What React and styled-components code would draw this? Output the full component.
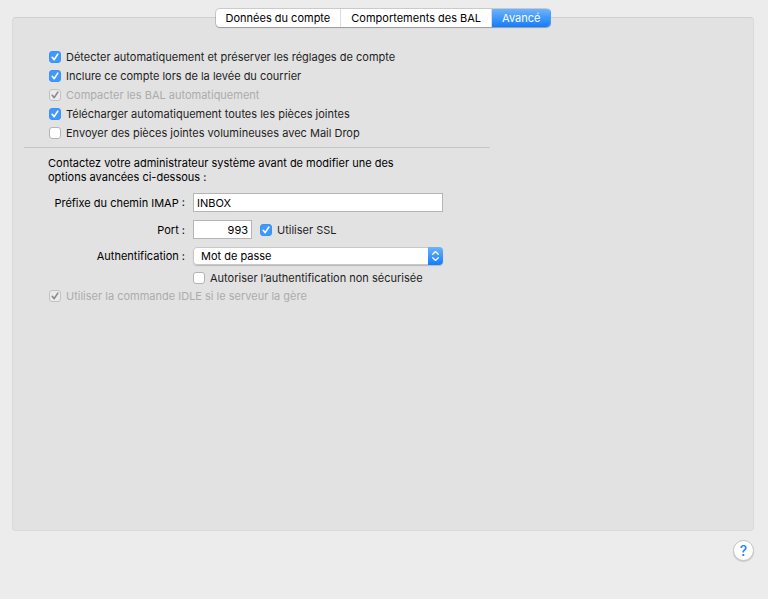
import { useState } from "react";
import styled, { createGlobalStyle } from "styled-components";

const TABS = ["Données du compte", "Comportements des BAL", "Avancé"];

const OPTIONS = [
  { id: "detect", label: "Détecter automatiquement et préserver les réglages de compte", checked: true },
  { id: "include", label: "Inclure ce compte lors de la levée du courrier", checked: true },
  { id: "compact", label: "Compacter les BAL automatiquement", checked: true, disabled: true },
  { id: "download", label: "Télécharger automatiquement toutes les pièces jointes", checked: true },
  { id: "maildrop", label: "Envoyer des pièces jointes volumineuses avec Mail Drop", checked: false },
];

function CheckOption({ id, label, checked = false, disabled = false }) {
  return (
    <CheckLabel htmlFor={id} $disabled={disabled}>
      <CheckMark>
        <CheckInput id={id} type="checkbox" defaultChecked={checked} disabled={disabled} />
        <svg width="12" height="12" viewBox="0 0 12 12" fill="none" aria-hidden="true">
          <path d="M3.2 6.3 L5.2 8.6 L8.8 3.1" stroke="currentColor" strokeWidth="1.7" strokeLinecap="round" strokeLinejoin="round" />
        </svg>
      </CheckMark>
      <span>{label}</span>
    </CheckLabel>
  );
}

export default function App() {
  const [tab, setTab] = useState(2);

  return (
    <>
      <GlobalStyle />
      <Page>
        <Tabs role="tablist">
          {TABS.map((name, i) => (
            <Tab key={name} role="tab" aria-selected={tab === i} $active={tab === i} onClick={() => setTab(i)}>
              {name}
            </Tab>
          ))}
        </Tabs>

        <Panel role="tabpanel">
          <Content>
            <CheckList>
              {OPTIONS.map((option) => (
                <CheckOption key={option.id} {...option} />
              ))}
            </CheckList>

            <Separator />

            <Advanced>
              <Notice>
                Contactez votre administrateur système avant de modifier une des options avancées ci-dessous :
              </Notice>

              <Form>
                <FieldLabel htmlFor="prefix">Préfixe du chemin IMAP :</FieldLabel>
                <TextField id="prefix" type="text" defaultValue="INBOX" />

                <FieldLabel htmlFor="port">Port :</FieldLabel>
                <FieldRow>
                  <PortField id="port" type="text" defaultValue="993" />
                  <CheckOption id="ssl" label="Utiliser SSL" checked />
                </FieldRow>

                <FieldLabel htmlFor="auth">Authentification :</FieldLabel>
                <SelectBox>
                  <Select id="auth" defaultValue="password">
                    <option value="password">Mot de passe</option>
                  </Select>
                  <SelectArrows>
                    <svg width="15" height="18" viewBox="0 0 15 18" fill="none" stroke="#fff" strokeWidth="1.3" strokeLinecap="round" strokeLinejoin="round" aria-hidden="true">
                      <path d="M4.7 7.2 L7.5 4.6 L10.3 7.2 M4.7 10.8 L7.5 13.4 L10.3 10.8" />
                    </svg>
                  </SelectArrows>
                </SelectBox>
              </Form>

              <Nested>
                <CheckOption id="insecure" label="Autoriser l’authentification non sécurisée" />
              </Nested>
              <CheckOption id="idle" label="Utiliser la commande IDLE si le serveur la gère" checked disabled />
            </Advanced>
          </Content>
        </Panel>

        <Footer>
          <HelpButton aria-label="Aide">?</HelpButton>
        </Footer>
      </Page>
    </>
  );
}

const GlobalStyle = createGlobalStyle`
  * {
    box-sizing: border-box;
  }

  body {
    margin: 0;
    background: #ececec;
    color: #000;
    font-family: Inter, "Liberation Sans", sans-serif;
    font-size: 11px;
    line-height: 14px;
  }

  button, input, select {
    margin: 0;
    font: inherit;
    color: inherit;
  }
`;

const Page = styled.main`
  display: flex;
  flex-direction: column;
  min-height: 100vh;
  padding: 9px 14px 0 12px;
`;

/* ── Tabs, straddling the top edge of the panel ── */
const Tabs = styled.div`
  display: flex;
  align-self: center;
  z-index: 1;
  height: 18px;
  margin-bottom: -10px;
  border-radius: 4px;
  background: #fff;
  box-shadow: 0 0 0 1px rgba(0,0,0,0.14), 0 1px 1px rgba(0,0,0,0.2);
`;

const Tab = styled.button`
  padding: 0 10px;
  border: none;
  border-right: 1px solid #dcdcdc;
  background: ${({ $active }) => $active ? "linear-gradient(#6cb3fa, #137dfd)" : "transparent"};
  box-shadow: ${({ $active }) => $active ? "1px 0 0 #4a9bf5" : "none"};
  color: ${({ $active }) => $active ? "#fff" : "#000"};
  line-height: 18px;
  white-space: nowrap;

  &:first-child {
    border-radius: 4px 0 0 4px;
  }

  &:last-child {
    border-right: none;
    border-radius: 0 4px 4px 0;
  }
`;

const Panel = styled.section`
  flex: 1;
  padding: 30px 11px 16px;
  border: 1px solid #dadada;
  border-top-color: #d0d0d0;
  border-radius: 4px;
  background: #e2e2e2;
`;

const Content = styled.div`
  max-width: 466px;
`;

/* ── Checkboxes ── */
const CheckList = styled.div`
  display: flex;
  flex-direction: column;
  align-items: flex-start;
  gap: 1px;
  padding-left: 25px;
`;

const CheckLabel = styled.label`
  display: flex;
  align-items: center;
  gap: 5px;
  line-height: 18px;
  color: ${({ $disabled }) => $disabled ? "#acacac" : "#1e1e1e"};
`;

const CheckMark = styled.span`
  display: grid;
  flex: none;
  width: 12px;
  height: 12px;
  color: #fff;

  > * {
    grid-area: 1 / 1;
  }

  svg {
    pointer-events: none;
  }

  input:disabled + svg {
    color: #8c8c8c;
  }

  input:not(:checked) + svg {
    visibility: hidden;
  }
`;

const CheckInput = styled.input`
  appearance: none;
  width: 12px;
  height: 12px;
  border: 1px solid #b4b4b4;
  border-radius: 3px;
  background: #fff;

  &:checked {
    border-color: #3a92f7;
    background: #3f99fc;
  }

  &:disabled {
    border-color: #c2c2c2;
    background: #ebebeb;
  }
`;

const Separator = styled.hr`
  height: 1px;
  margin: 5px 0 8px;
  border: none;
  background: #c6c6c6;
`;

/* ── Server settings ── */
const Advanced = styled.div`
  padding-left: 25px;
`;

const Notice = styled.p`
  max-width: 370px;
  margin: 0 0 9px -1px;
`;

const Form = styled.div`
  display: grid;
  grid-template-columns: 136px minmax(0, 250px);
  align-items: center;
  gap: 8px;
`;

const FieldLabel = styled.label`
  text-align: right;
  white-space: nowrap;
`;

const FieldRow = styled.div`
  display: flex;
  align-items: center;
  gap: 8px;
`;

const TextField = styled.input`
  width: 100%;
  height: 19px;
  padding: 0 3px;
  border: 1px solid #b5b5b5;
  background: #fff;
`;

const PortField = styled(TextField)`
  width: 59px;
  text-align: right;
`;

const SelectBox = styled.div`
  display: grid;
  grid-template-columns: 1fr 15px;
  height: 18px;
  border-radius: 4px;
  background: #fff;
  box-shadow: inset 0 0 0 1px #c8c8c8, 0 1px 1px rgba(0,0,0,0.18);
`;

const Select = styled.select`
  grid-area: 1 / 1 / 2 / 3;
  appearance: none;
  padding: 0 23px 0 8px;
  border: none;
  background: transparent;
`;

const SelectArrows = styled.span`
  grid-area: 1 / 2;
  height: 18px;
  border-radius: 0 4px 4px 0;
  background: linear-gradient(#6cb3fa, #137dfd);
  pointer-events: none;

  svg {
    display: block;
  }
`;

const Nested = styled.div`
  padding: 4px 0 0 144px;
`;

const Footer = styled.footer`
  display: flex;
  justify-content: flex-end;
  padding: 9px 0 38px;
`;

const HelpButton = styled.button`
  width: 21px;
  height: 21px;
  padding: 0;
  border: 1px solid #c4c4c4;
  border-radius: 50%;
  background: #fff;
  box-shadow: 0 1px 1px rgba(0,0,0,0.15);
  color: #1a82fb;
  font-size: 14px;
  font-weight: 500;
  line-height: 19px;
  text-align: center;
`;
